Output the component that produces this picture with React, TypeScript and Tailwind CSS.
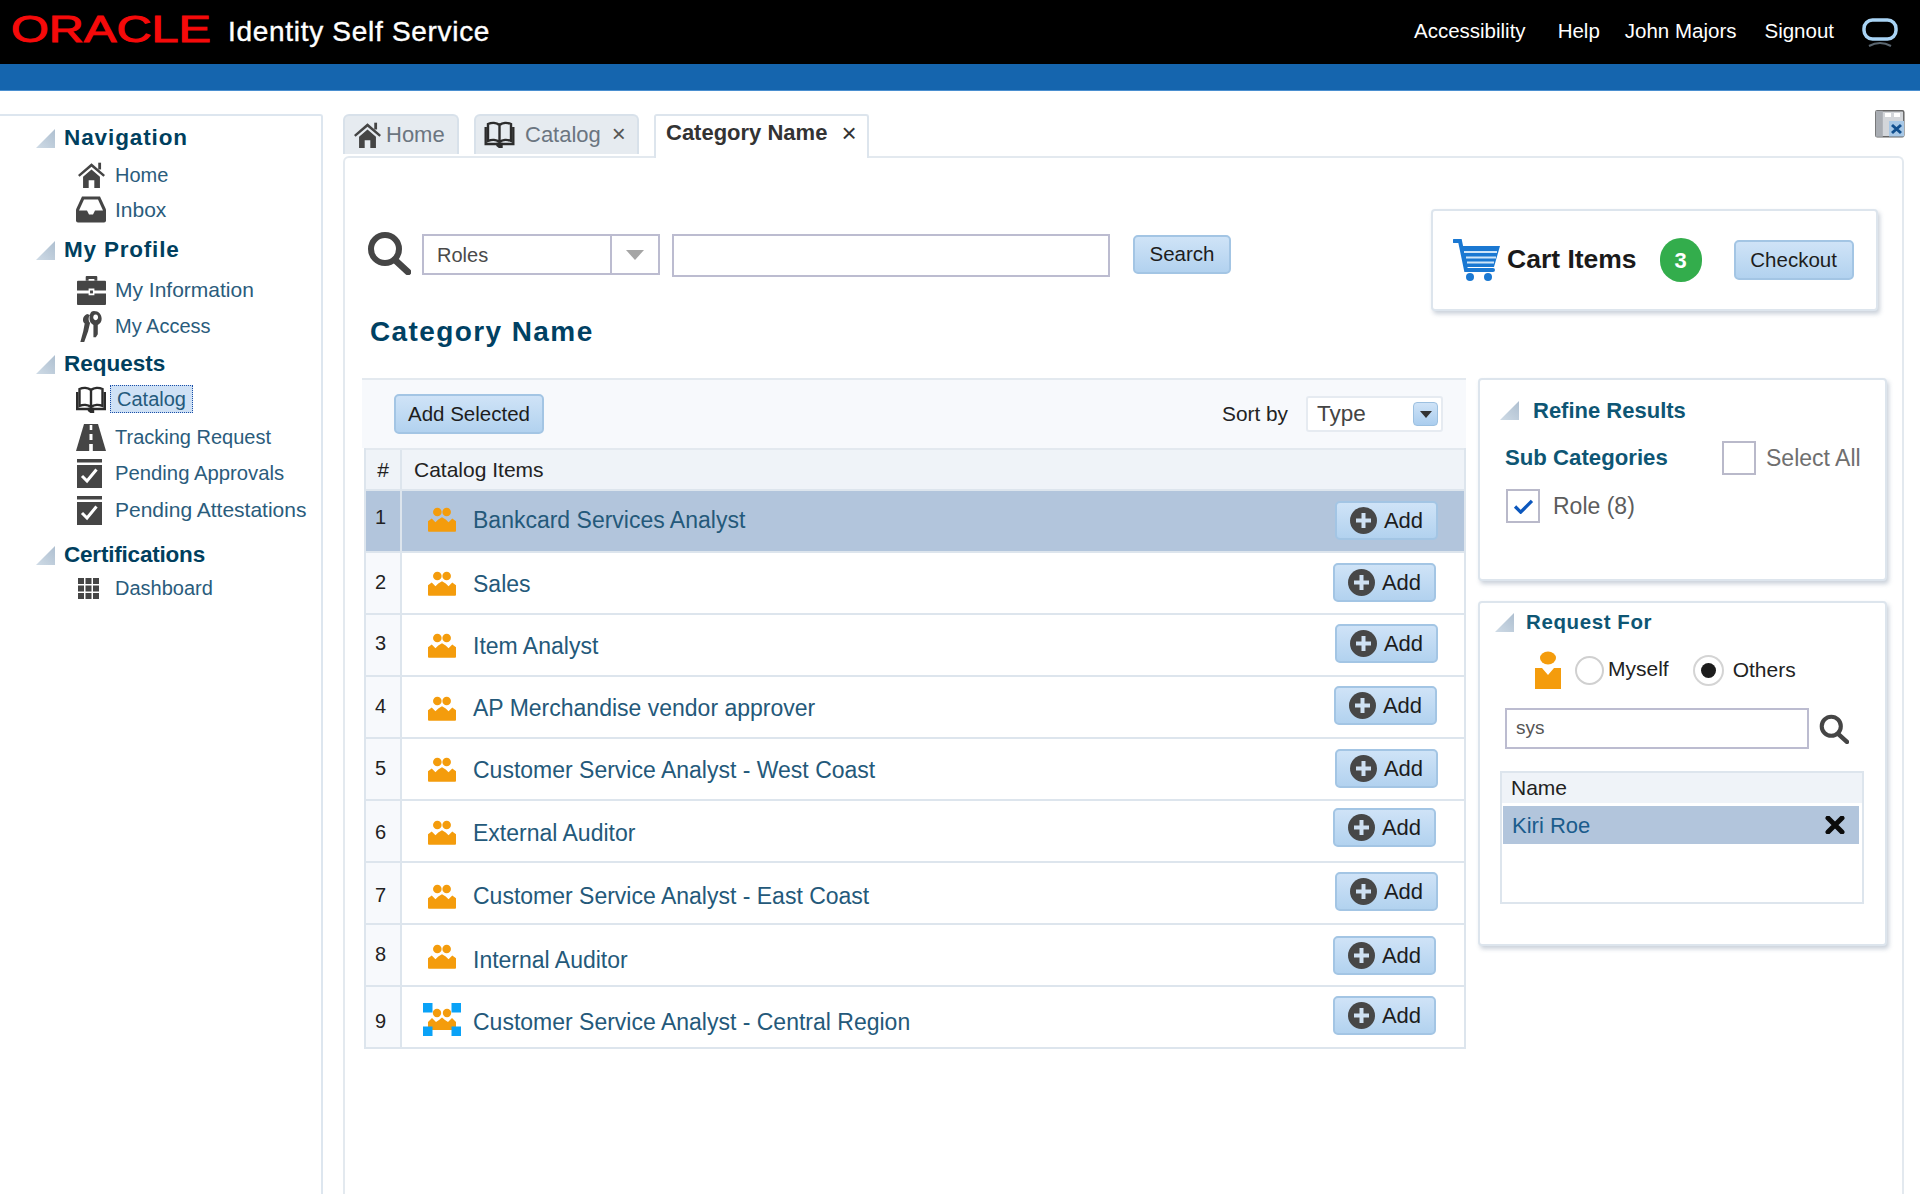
import React from "react";

const dark = "#454545";

function HomeIcon({ className = "w-[27px] h-[27px]" }: { className?: string }) {
  return (
    <svg viewBox="0 0 24 24" className={className} fill={dark}>
      <path d="M0 12.5 L12 2 L24 12.5 L22.6 14 L12 5 L1.4 14Z" />
      <path d="M4.5 14 L12 7.5 L19.5 14 V24 H14.5 V17 H9.5 V24 H4.5Z" />
      <rect x="18" y="1.5" width="2.5" height="6" />
    </svg>
  );
}

function InboxIcon() {
  return (
    <svg viewBox="0 0 30 26" className="w-[31px] h-[27px]">
      <path d="M6 0 H24 L30 13 V24 Q30 26 28 26 H2 Q0 26 0 24 V13Z" fill={dark} />
      <path d="M8 3 H22 L27 14 H19 L17 18 H13 L11 14 H3Z" fill="#fff" />
    </svg>
  );
}

function BriefcaseIcon() {
  return (
    <svg viewBox="0 0 30 30" className="w-[31px] h-[31px] ml-[1px]" fill={dark}>
      <path d="M9 5 V1 Q9 0 10 0 H20 Q21 0 21 1 V5 H18 V3 H12 V5Z" />
      <path d="M1 5 H29 Q30 5 30 6 V15 H18 V13 H12 V15 H0 V6 Q0 5 1 5Z" />
      <path d="M0 18 H12 V20 H18 V18 H30 V29 Q30 30 29 30 H1 Q0 30 0 29Z" />
      <rect x="13.5" y="15" width="3" height="3" />
    </svg>
  );
}

function KeysIcon() {
  return (
    <svg viewBox="0 0 24 32" className="w-[24px] h-[31px]" fill={dark}>
      <path fillRule="evenodd" d="M15 0 C20 0 23 3.500 23 8 C23 11 21.500 13 19 14.500 V24 L17 27 H14.500 V14.500 C12 13 10.500 11 10.500 8 C10.500 3.500 11.500 0 15 0Z M16.800 3.500 A2.500 3 0 1 0 16.801 3.500Z" />
      <path d="M8 3 L11 4 C9 6 9 10 11 12.500 L9 21 L5 32 H1 L4 21 L5.500 13 C3 11 2.500 5.500 8 3Z" />
    </svg>
  );
}

function BookIcon({ className = "w-[31px] h-[27px]" }: { className?: string }) {
  return (
    <svg viewBox="0 0 30 27" className={className} fill="none" stroke="#2c2c2c" strokeWidth="2.400">
      <path d="M15 4 C12 1.500 7 1.500 3.500 3 V20 C7 18.500 12 18.500 15 21 C18 18.500 23 18.500 26.500 20 V3 C23 1.500 18 1.500 15 4 V21" />
      <path d="M1.200 6 V23 H28.800 V6" />
      <path d="M13 23 H17 V26 H15 L13 24.500Z" fill="#2c2c2c" />
    </svg>
  );
}

function RoadIcon() {
  return (
    <svg viewBox="0 0 30 27" className="w-[31px] h-[27px]">
      <path d="M8 0 H22 L30 27 H0Z" fill={dark} />
      <rect x="13.700" y="1" width="2.600" height="5" fill="#fff" />
      <rect x="13.500" y="10" width="3" height="6" fill="#fff" />
      <rect x="13.200" y="20" width="3.600" height="7" fill="#fff" />
    </svg>
  );
}

function CheckIcon() {
  return (
    <svg viewBox="0 0 25 29" className="w-[25px] h-[29px] mr-[3px]">
      <rect x="0" y="0" width="25" height="3.500" fill={dark} />
      <rect x="0" y="6" width="25" height="23" fill={dark} />
      <path d="M5 17 L10 22 L19.500 10.500" fill="none" stroke="#fff" strokeWidth="3" />
    </svg>
  );
}

function GridIcon() {
  return (
    <svg viewBox="0 0 21 21" className="w-[21px] h-[21px] mr-[6px]" fill={dark}>
      {[0, 7.500, 15].flatMap((y) =>
        [0, 7.500, 15].map((x) => <rect key={`${x}-${y}`} x={x} y={y} width="6" height="6" />)
      )}
    </svg>
  );
}

function SearchGlyph({ className }: { className: string }) {
  return (
    <svg viewBox="0 0 44 44" className={className} fill="none" stroke={dark}>
      <circle cx="18" cy="18" r="14" strokeWidth="6" />
      <path d="M28 29 L41 41" strokeWidth="6.500" strokeLinecap="round" />
    </svg>
  );
}

function Triangle() {
  return (
    <svg viewBox="0 0 19 19" className="w-[19px] h-[19px] shrink-0">
      <defs>
        <linearGradient id="tri" x1="0" y1="1" x2="1" y2="0">
          <stop offset="0" stopColor="#cfdbe6" />
          <stop offset="1" stopColor="#aebfd0" />
        </linearGradient>
      </defs>
      <path d="M19 0 V19 H0Z" fill="url(#tri)" />
    </svg>
  );
}

function GroupIcon() {
  return (
    <svg viewBox="0 0 30 26" className="w-[28px] h-[25px]" fill="#f49c0c">
      <circle cx="10" cy="5" r="4.600" />
      <circle cx="20" cy="5" r="4.600" />
      <path d="M0 25 V15 L4 12 L8 16 L11 13 L15 10.500 L19 13 L22 16 L26 12 L30 15 V25 Q30 26 29 26 H1 Q0 26 0 25Z" />
    </svg>
  );
}

function GroupSelectedIcon() {
  return (
    <svg viewBox="0 0 38 33" className="w-[38px] h-[33px]">
      <g fill="#f49c0c">
        <circle cx="14" cy="10" r="4.200" />
        <circle cx="24" cy="10" r="4.200" />
        <path d="M5 27 V19 L9 15 L13 19 L16 17 L19 14.500 L22 17 L25 19 L29 15 L33 19 V27Z" />
      </g>
      <g fill="#0aa2f7">
        <rect x="0" y="0" width="9.500" height="9.500" />
        <rect x="28.500" y="0" width="9.500" height="9.500" />
        <rect x="0" y="23.500" width="9.500" height="9.500" />
        <rect x="28.500" y="23.500" width="9.500" height="9.500" />
      </g>
    </svg>
  );
}

function PlusCircle() {
  return (
    <svg viewBox="0 0 27 27" className="w-[27px] h-[27px] shrink-0">
      <circle cx="13.500" cy="13.500" r="13.500" fill="#474747" />
      <path d="M13.500 6 V21 M6 13.500 H21" stroke="#cfe1f3" strokeWidth="4" />
    </svg>
  );
}

function CartIcon() {
  return (
    <svg viewBox="0 0 47 42" className="w-[47px] h-[42px]">
      <path d="M1 2 H7 L13 31 H40" fill="none" stroke="#1a78d2" strokeWidth="4" strokeLinecap="round" />
      <path d="M8 7 H47 L41 28 H12Z" fill="#1a78d2" />
      <path d="M11 13 H44 M13 18.500 H43 M14 23.500 H41" stroke="#cfe5f8" strokeWidth="1.800" />
      <circle cx="17" cy="38" r="4" fill="#1a78d2" />
      <circle cx="35" cy="38" r="4" fill="#1a78d2" />
    </svg>
  );
}

function Btn({ children, className }: { children: React.ReactNode; className: string }) {
  return (
    <button className={`flex items-center justify-center rounded-[5px] border-2 border-[#a3c5e4] bg-gradient-to-b from-[#cfe3f7] to-[#b2d2ef] text-[20.500px] text-[#1d1d1d] shrink-0 ${className}`}>
      {children}
    </button>
  );
}

const navRows = [
  { kind: "head", label: "Navigation", h: "h-[36px]", track: "tracking-[0.900px]" },
  { kind: "item", label: "Home", h: "h-[37px]", size: "text-[20px]", icon: <HomeIcon /> },
  { kind: "item", label: "Inbox", h: "h-[33px]", size: "text-[21px]", icon: <InboxIcon /> },
  { kind: "head", label: "My Profile", h: "h-[48px]", track: "tracking-[0.800px]" },
  { kind: "item", label: "My Information", h: "h-[32px]", size: "text-[21px]", icon: <BriefcaseIcon /> },
  { kind: "item", label: "My Access", h: "h-[40px]", size: "text-[20px]", icon: <KeysIcon /> },
  { kind: "head", label: "Requests", h: "h-[36px]", track: "tracking-[0px]" },
  { kind: "selected", label: "Catalog", h: "h-[34px]", icon: <BookIcon /> },
  { kind: "item", label: "Tracking Request", h: "h-[42px]", size: "text-[20px]", icon: <RoadIcon /> },
  { kind: "item", label: "Pending Approvals", h: "h-[30px]", size: "text-[20.300px]", icon: <CheckIcon /> },
  { kind: "item", label: "Pending Attestations", h: "h-[44px]", size: "text-[21px]", icon: <CheckIcon /> },
  { kind: "head", label: "Certifications", h: "h-[46px]", track: "tracking-[-0.200px]" },
  { kind: "item", label: "Dashboard", h: "h-[20px]", size: "text-[20px]", icon: <GridIcon /> },
];

// the source rows are not quite aligned, so each row carries its own nudges
const catalogRows = [
  { name: "Bankcard Services Analyst", num: "mb-[8px]", text: "mb-[2px]", ic: "mb-[4px]", btn: "mb-[2px] mr-[26px]" },
  { name: "Sales", num: "mb-[2px]", text: "mt-[2px]", ic: "", btn: "mb-[2px] mr-[28px]" },
  { name: "Item Analyst", num: "mb-[4px]", text: "mt-[2px]", ic: "", btn: "mb-[4px] mr-[26px]" },
  { name: "AP Merchandise vendor approver", num: "mb-[2px]", text: "mt-[2px]", ic: "mt-[2px]", btn: "mb-[4px] mr-[27px]" },
  { name: "Customer Service Analyst - West Coast", num: "mb-[2px]", text: "mt-[2px]", ic: "", btn: "mb-[2px] mr-[26px]" },
  { name: "External Auditor", num: "mt-[2px]", text: "mt-[5px]", ic: "mt-[2px]", btn: "mb-[8px] mr-[28px]" },
  { name: "Customer Service Analyst - East Coast", num: "mt-[4px]", text: "mt-[6px]", ic: "mt-[6px]", btn: "mb-[4px] mr-[26px]" },
  { name: "Internal Auditor", num: "mb-[2px]", text: "mt-[10px]", ic: "mt-[2px]", btn: "mr-[28px]" },
  { name: "Customer Service Analyst - Central Region", num: "mt-[8px]", text: "mt-[10px]", ic: "mt-[4px]", btn: "mb-[4px] mr-[28px]", special: true },
];

function Sidebar() {
  return (
    <aside className="w-[323px] shrink-0 border-2 border-b-0 border-l-0 border-[#dde6ef] rounded-tr-[3px] pt-[4px]">
      {navRows.map((row) =>
        row.kind === "head" ? (
          <div key={row.label} className={`${row.h} flex items-center pl-[36px] gap-[9px]`}>
            <Triangle />
            <span className={`text-[22.500px] font-bold text-[#003f5e] ${row.track}`}>{row.label}</span>
          </div>
        ) : (
          <div key={row.label} className={`${row.h} flex items-center pl-[76px]`}>
            <div className="w-[30px] shrink-0 flex items-center justify-center">{row.icon}</div>
            {row.kind === "selected" ? (
              <span className="ml-[4px] h-[28px] w-[83px] flex items-center justify-center border border-dotted border-[#1b4fa8] bg-[#cfe1f5] text-[20px] text-[#245a7c]">
                {row.label}
              </span>
            ) : (
              <span className={`ml-[9px] text-[#2a5c7c] whitespace-nowrap ${row.size}`}>{row.label}</span>
            )}
          </div>
        )
      )}
    </aside>
  );
}

function Tabs() {
  return (
    <div className="h-[42px] flex items-start relative z-10">
      <div className="w-[116px] h-[40px] flex items-center pl-[9px] pb-[2px] gap-[5px] rounded-t-[6px] border-2 border-b-0 border-[#d8e1ea] bg-[#e6ebf0] text-[22px] text-[#6b7580]">
        <HomeIcon className="w-[27px] h-[27px]" />
        <span>Home</span>
      </div>
      <div className="ml-[15px] w-[165px] h-[40px] flex items-center pl-[8px] pb-[2px] rounded-t-[6px] border-2 border-b-0 border-[#d8e1ea] bg-[#e6ebf0] text-[22px] text-[#6b7580]">
        <BookIcon className="w-[31px] h-[27px]" />
        <span className="ml-[10px]">Catalog</span>
        <span className="ml-[11px] text-[24px] leading-none text-[#555]">×</span>
      </div>
      <div className="ml-[15px] w-[215px] h-[44px] flex items-center pl-[10px] pb-[9px] rounded-t-[3px] border-2 border-b-0 border-[#dde5ed] bg-white text-[22px] font-bold text-[#333]">
        <span>Category Name</span>
        <span className="ml-[14px] text-[26px] leading-none font-normal">×</span>
      </div>
      <svg viewBox="0 0 30 28" className="w-[30px] h-[28px] ml-auto -mt-[4px] mr-[-1px]">
        <rect x="0.800" y="0.800" width="28" height="26" rx="1.500" fill="#d3d6da" stroke="#666" strokeWidth="1.500" />
        <rect x="0.800" y="0.800" width="7" height="26" fill="#a9adb3" />
        <rect x="10" y="3" width="6" height="4" fill="#fff" />
        <rect x="19" y="3" width="6" height="4" fill="#fff" />
        <rect x="14" y="11" width="15" height="15.500" fill="#a8c8e6" />
        <path d="M17 15 L26 23 M26 15 L17 23" stroke="#12508f" strokeWidth="3" />
      </svg>
    </div>
  );
}

function SearchHeader() {
  return (
    <div className="h-[220px] flex items-start justify-between">
      <div>
        <div className="mt-[76px] ml-[5px] flex items-start">
          <SearchGlyph className="w-[44px] h-[44px] -mt-[3px]" />
          <div className="ml-[11px] w-[238px] h-[41px] flex border-2 border-[#bcbcd0] text-[20px] text-[#4a4a4a]">
            <div className="w-[188px] flex items-center pl-[13px] border-r-2 border-[#bcbcd0]">Roles</div>
            <div className="flex-1 flex items-center justify-center">
              <svg viewBox="0 0 18 10" className="w-[18px] h-[10px]">
                <path d="M0 0 H18 L9 10Z" fill="#a5a5a5" />
              </svg>
            </div>
          </div>
          <div className="ml-[12px] w-[438px] h-[43px] border-2 border-[#bcbcd0]" />
          <Btn className="ml-[23px] mt-[1px] w-[98px] h-[39px]">Search</Btn>
        </div>
        <h1 className="mt-[37px] ml-[8px] text-[28px] leading-[36px] font-bold text-[#004163] tracking-[1.400px]">Category Name</h1>
      </div>
      <div className="mt-[51px] mr-[24px] w-[447px] h-[102px] flex items-center pl-[20px] rounded-[4px] border-2 border-[#dde5ed] bg-white shadow-[2px_3px_4px_rgba(140,155,175,0.45)]">
        <CartIcon />
        <span className="ml-[7px] text-[26.500px] font-bold text-[#1a1a1a]">Cart Items</span>
        <span className="ml-[23px] w-[42px] h-[44px] rounded-full bg-[#33ad4c] text-white text-[22px] font-bold flex items-center justify-center">3</span>
        <Btn className="ml-[32px] w-[120px] h-[40px]">Checkout</Btn>
      </div>
    </div>
  );
}

function CatalogTable() {
  return (
    <div className="w-[1104px] shrink-0">
      <div className="h-[70px] flex items-center border-t-2 border-[#e3e9ef] bg-[#f7f9fc]">
        <Btn className="ml-[32px] w-[150px] h-[40px]">Add Selected</Btn>
        <span className="ml-auto text-[20.800px] text-[#222]">Sort by</span>
        <div className="ml-[18px] mr-[23px] w-[137px] h-[36px] flex items-center justify-between pl-[9px] pr-[3px] rounded-[3px] border-2 border-[#e6ebf1] bg-white text-[22.500px] text-[#444]">
          <span>Type</span>
          <span className="w-[25px] h-[24px] rounded-[4px] border border-[#9cc0e0] bg-gradient-to-b from-[#cfe3f7] to-[#aacdee] flex items-center justify-center">
            <svg viewBox="0 0 12 7" className="w-[12px] h-[7px]">
              <path d="M0 0 H12 L6 7Z" fill="#333" />
            </svg>
          </span>
        </div>
      </div>
      <div className="ml-[2px] border-2 border-t-0 border-[#dde5ed]">
        <div className="h-[41px] flex items-center bg-[#eff3f8] border-t-2 border-[#e3e9ef] text-[21px] text-[#222]">
          <div className="w-[36px] h-full flex items-center justify-center border-r-2 border-[#dde5ed]">#</div>
          <div className="pl-[12px]">Catalog Items</div>
        </div>
        {catalogRows.map((row, i) => (
          <div key={row.name} className={`h-[62px] flex items-stretch border-t-2 border-[#dde5ed] ${i === 0 ? "bg-[#b2c5dc]" : "bg-white"}`}>
            <div className={`w-[36px] shrink-0 flex items-center justify-center pr-[5px] border-r-2 border-[#dde5ed] text-[20px] text-[#222] ${i === 0 ? "" : "bg-[#f7f9fc]"}`}>
              <span className={row.num}>{i + 1}</span>
            </div>
            <div className="pl-[21px] w-[38px] box-content shrink-0 flex items-center justify-center">
              <div className={`flex ${row.ic}`}>{row.special ? <GroupSelectedIcon /> : <GroupIcon />}</div>
            </div>
            <div className={`ml-[12px] self-center text-[23px] text-[#24597a] ${row.text}`}>{row.name}</div>
            <div className="ml-auto flex items-center">
              <Btn className={`w-[103px] h-[39px] gap-[7px] ${row.btn}`}>
                <PlusCircle />
                <span className="text-[22px]">Add</span>
              </Btn>
            </div>
          </div>
        ))}
      </div>
    </div>
  );
}

const panelCls = "rounded-[4px] border-2 border-[#dde5ed] bg-white shadow-[2px_3px_4px_rgba(140,155,175,0.45)]";

function RightPanels() {
  return (
    <div className="ml-[12px] w-[409px] shrink-0">
      <div className={`${panelCls} h-[203px]`}>
        <div className="mt-[16px] h-[28px] flex items-center pl-[20px]">
          <Triangle />
          <span className="ml-[14px] text-[22px] font-bold text-[#0e5674]">Refine Results</span>
        </div>
        <div className="mt-[17px] h-[34px] flex items-center pl-[25px]">
          <span className="w-[217px] text-[22.200px] font-bold text-[#0e5674] whitespace-nowrap">Sub Categories</span>
          <span className="w-[34px] h-[34px] border-2 border-[#b9b9ca] bg-white" />
          <span className="ml-[10px] text-[23px] text-[#6f6f6f] whitespace-nowrap">Select All</span>
        </div>
        <div className="mt-[14px] h-[34px] flex items-center pl-[26px]">
          <span className="w-[34px] h-[34px] flex items-center justify-center border-2 border-[#b9b9ca] bg-white">
            <svg viewBox="0 0 22 16" className="w-[21px] h-[15px]">
              <path d="M2 8 L8 14 L20 2" fill="none" stroke="#0b57bd" strokeWidth="3.500" />
            </svg>
          </span>
          <span className="ml-[13px] text-[23px] text-[#5c5c5c]">Role (8)</span>
        </div>
      </div>
      <div className={`${panelCls} mt-[20px] h-[345px]`}>
        <div className="mt-[7px] h-[24px] flex items-center pl-[15px]">
          <Triangle />
          <span className="ml-[12px] text-[20.500px] font-bold text-[#0e5674] tracking-[0.600px]">Request For</span>
        </div>
        <div className="mt-[16px] h-[40px] flex items-center pl-[55px]">
          <svg viewBox="0 0 26 38" className="w-[26px] h-[38px] shrink-0">
            <ellipse cx="13" cy="7" rx="8" ry="6.500" fill="#f49c0c" />
            <path d="M0 17 H7 L13 24 L19 17 H26 V38 H0Z" fill="#f49c0c" />
          </svg>
          <span className="ml-[14px] w-[29px] h-[29px] rounded-full border-2 border-[#d0d0d0] bg-white shrink-0" />
          <span className="ml-[4px] -mt-[2px] text-[21px] text-[#222]">Myself</span>
          <span className="ml-[24px] w-[31px] h-[31px] rounded-full border-2 border-[#d4d4d4] bg-white flex items-center justify-center shrink-0">
            <span className="w-[15px] h-[15px] rounded-full bg-[#1d1d1d]" />
          </span>
          <span className="ml-[9px] text-[21px] text-[#222]">Others</span>
        </div>
        <div className="mt-[18px] flex items-center pl-[25px]">
          <div className="w-[304px] h-[41px] flex items-center pl-[9px] border-2 border-[#bcbcd0] text-[19px] text-[#555]">sys</div>
          <SearchGlyph className="ml-[10px] w-[30px] h-[30px]" />
        </div>
        <div className="mt-[22px] ml-[20px] w-[364px] h-[133px] border-2 border-[#dde5ed]">
          <div className="h-[30px] flex items-center pl-[9px] bg-[#eff3f8] text-[21px] text-[#222]">Name</div>
          <div className="mt-[3px] ml-[1px] mr-[3px] h-[38px] flex items-center justify-between pl-[9px] pr-[14px] bg-[#b2c5dc] text-[22px] text-[#1b5c8c]">
            <span>Kiri Roe</span>
            <svg viewBox="0 0 20 18" className="w-[20px] h-[18px]">
              <path d="M3 2 L17 16 M17 2 L3 16" stroke="#0c0c0c" strokeWidth="5" strokeLinecap="round" />
            </svg>
          </div>
        </div>
      </div>
    </div>
  );
}

export default function App() {
  return (
    <div className="h-[1194px] overflow-hidden bg-white font-['Liberation_Sans',sans-serif]">
      <header className="h-[64px] bg-black flex items-center text-white">
        <svg viewBox="0 0 216 48" className="ml-[11px] w-[216px] h-[48px] mt-[-4px]">
          <text x="0" y="36" fontFamily="'Liberation Sans', sans-serif" fontSize="37" fill="#f60a0a" textLength="200" lengthAdjust="spacingAndGlyphs" stroke="#f60a0a" strokeWidth="1">
            ORACLE
          </text>
        </svg>
        <span className="ml-[1px] text-[28px] tracking-[0.700px] [-webkit-text-stroke:0.400px_white]">Identity Self Service</span>
        <nav className="ml-auto flex items-center text-[20.500px] -mt-[2px]">
          <span>Accessibility</span>
          <span className="ml-[32px]">Help</span>
          <span className="ml-[25px]">John Majors</span>
          <span className="ml-[28px]">Signout</span>
          <svg viewBox="0 0 36 30" className="ml-[28px] mr-[22px] w-[36px] h-[30px] mt-[3px]">
            <rect x="2" y="2" width="32" height="19" rx="8.500" fill="none" stroke="#a9d4f5" strokeWidth="3.500" />
            <path d="M7 28 Q18 22 29 28" fill="none" stroke="#5a6670" strokeWidth="2" />
          </svg>
        </nav>
      </header>
      <div className="h-[27px] bg-[#1565ae] border-b border-[#4a8fd0]" />
      <div className="flex pt-[23px]">
        <Sidebar />
        <main className="ml-[20px] w-[1561px] shrink-0">
          <Tabs />
          <div className="h-[1040px] rounded-t-[6px] border-2 border-b-0 border-[#e3e9ef] pl-[17px]">
            <SearchHeader />
            <div className="flex items-start">
              <CatalogTable />
              <RightPanels />
            </div>
          </div>
        </main>
      </div>
    </div>
  );
}
